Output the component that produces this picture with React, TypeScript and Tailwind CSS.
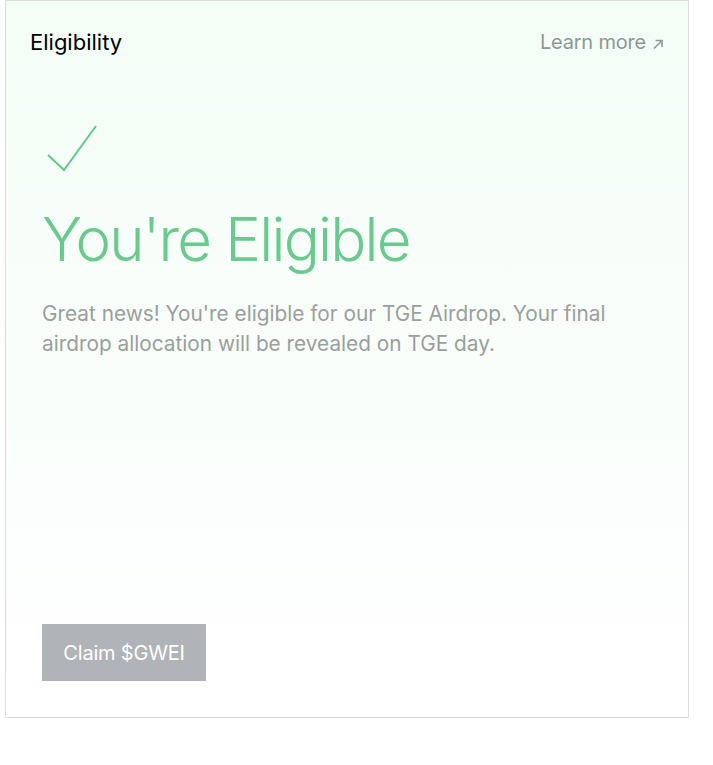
import React from "react";

export default function App() {
  return (
    <div className="min-h-screen bg-white pl-[5px] pr-[24px] font-['Inter',sans-serif]">
      <div className="flex h-[718px] flex-col border border-[#dcdcdc] bg-gradient-to-b from-[#f3fdf6] to-white">
        <div className="flex items-center justify-between px-[24px] pt-[26px]">
          <h2 className="text-[22px] leading-[30px] text-black">Eligibility</h2>
          <a className="flex items-center gap-[6px] text-[20px] leading-[30px] tracking-[-0.01em] text-[#8e9893]">
            Learn more
            <svg width="12" height="12" viewBox="0 0 12 12" fill="none" className="mt-[3px]">
              <path d="M2 10.5L10 2.5M3.5 2.5H10V9" stroke="currentColor" strokeWidth="1.6" />
            </svg>
          </a>
        </div>

        <div className="flex flex-1 flex-col px-[36px]">
          <svg width="52" height="48" viewBox="0 0 52 48" fill="none" className="ml-[4px] mt-[67px]">
            <path d="M2 31L18 46L50 2" stroke="#5fc98a" strokeWidth="2" />
          </svg>
          <h1 className="mt-[31px] text-[60px] font-light leading-[72px] tracking-[-0.03em] text-[#68ca8d]">
            You're Eligible
          </h1>
          <p className="mt-[24px] max-w-[600px] text-[20.8px] leading-[30px] text-[#9a9f9c]">
            Great news! You're eligible for our TGE Airdrop. Your final airdrop allocation will be
            revealed on TGE day.
          </p>
          <div className="mt-auto pb-[36px]">
            <button className="h-[57px] w-[164px] bg-[#b0b3b7] text-[20px] tracking-[-0.01em] text-white">
              Claim $GWEI
            </button>
          </div>
        </div>
      </div>
    </div>
  );
}
